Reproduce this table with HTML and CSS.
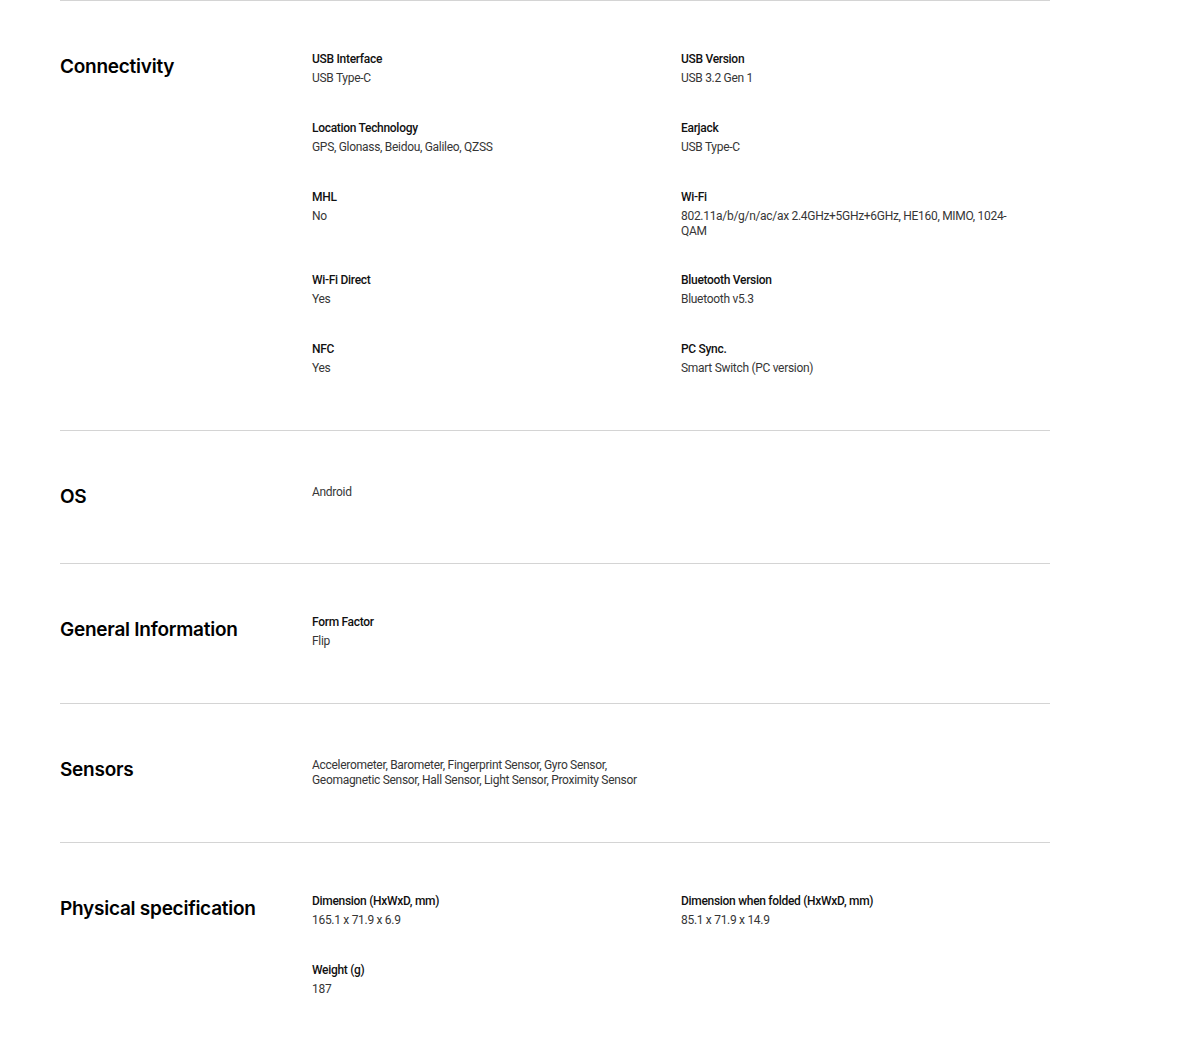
FILE: index.html
```html
<!DOCTYPE html>
<html lang="en">
<head>
<meta charset="utf-8">
<title>Specifications</title>
<link rel="stylesheet" href="styles.css">
</head>
<body>
<div class="specs">
  <section class="spec-section">
    <h2 class="spec-title">Connectivity</h2>
    <div class="spec-grid">
      <div class="spec-item"><div class="spec-label">USB Interface</div><div class="spec-value">USB Type-C</div></div>
      <div class="spec-item"><div class="spec-label">USB Version</div><div class="spec-value">USB 3.2 Gen 1</div></div>
      <div class="spec-item"><div class="spec-label">Location Technology</div><div class="spec-value">GPS, Glonass, Beidou, Galileo, QZSS</div></div>
      <div class="spec-item"><div class="spec-label">Earjack</div><div class="spec-value">USB Type-C</div></div>
      <div class="spec-item"><div class="spec-label">MHL</div><div class="spec-value">No</div></div>
      <div class="spec-item"><div class="spec-label">Wi-Fi</div><div class="spec-value">802.11a/b/g/n/ac/ax 2.4GHz+5GHz+6GHz, HE160, MIMO, 1024-QAM</div></div>
      <div class="spec-item"><div class="spec-label">Wi-Fi Direct</div><div class="spec-value">Yes</div></div>
      <div class="spec-item"><div class="spec-label">Bluetooth Version</div><div class="spec-value">Bluetooth v5.3</div></div>
      <div class="spec-item"><div class="spec-label">NFC</div><div class="spec-value">Yes</div></div>
      <div class="spec-item"><div class="spec-label">PC Sync.</div><div class="spec-value">Smart Switch (PC version)</div></div>
    </div>
  </section>
  <section class="spec-section">
    <h2 class="spec-title">OS</h2>
    <div class="spec-grid">
      <div class="spec-item spec-item--plain"><div class="spec-value">Android</div></div>
    </div>
  </section>
  <section class="spec-section">
    <h2 class="spec-title">General Information</h2>
    <div class="spec-grid">
      <div class="spec-item"><div class="spec-label">Form Factor</div><div class="spec-value">Flip</div></div>
    </div>
  </section>
  <section class="spec-section">
    <h2 class="spec-title">Sensors</h2>
    <div class="spec-grid">
      <div class="spec-item spec-item--plain"><div class="spec-value">Accelerometer, Barometer, Fingerprint Sensor, Gyro Sensor, Geomagnetic Sensor, Hall Sensor, Light Sensor, Proximity Sensor</div></div>
    </div>
  </section>
  <section class="spec-section">
    <h2 class="spec-title">Physical specification</h2>
    <div class="spec-grid">
      <div class="spec-item"><div class="spec-label">Dimension (HxWxD, mm)</div><div class="spec-value">165.1 x 71.9 x 6.9</div></div>
      <div class="spec-item"><div class="spec-label">Dimension when folded (HxWxD, mm)</div><div class="spec-value">85.1 x 71.9 x 14.9</div></div>
      <div class="spec-item"><div class="spec-label">Weight (g)</div><div class="spec-value">187</div></div>
    </div>
  </section>
</div>
</body>
</html>
```
FILE: styles.css
```css
html, body {
  margin: 0;
  padding: 0;
  background: #fff;
}
body {
  font-family: Roboto, "Liberation Sans", Arial, sans-serif;
  color: #000;
}
.specs {
  width: 990px;
  margin-left: 60px;
}
.spec-section {
  display: flex;
  border-top: 1px solid #d4d4d4;
  padding: 50px 0 54px;
}
.spec-title {
  width: 252px;
  flex: 0 0 252px;
  margin: 4px 0 0;
  font-family: Inter, "Liberation Sans", sans-serif;
  font-weight: 600;
  font-size: 19px;
  line-height: 24px;
  letter-spacing: -0.25px;
  color: #000;
}
.spec-grid {
  flex: 1;
  display: grid;
  grid-template-columns: 1fr 1fr;
  row-gap: 33.75px;
}
.spec-item {
  padding-right: 29px;
}
.spec-item--plain {
  padding-top: 4px;
}
.spec-label {
  font-size: 12px;
  line-height: 16px;
  font-weight: 500;
  letter-spacing: -0.3px;
  color: #111;
  margin-bottom: 4px;
}
.spec-value {
  font-size: 12px;
  line-height: 15px;
  letter-spacing: -0.3px;
  color: #363636;
}
```
